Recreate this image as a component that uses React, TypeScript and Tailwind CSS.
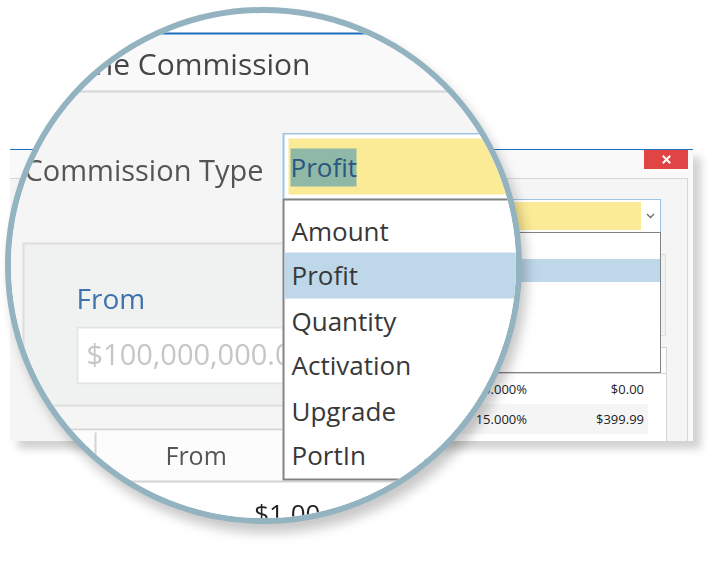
import React from 'react';

const TYPES = ['Amount', 'Profit', 'Quantity', 'Activation', 'Upgrade', 'PortIn'];

const ROWS = [
  { from: '$1.00', to: '$399.99', rate: '0.000%', amount: '$0.00' },
  { from: '$400.00', to: '$100,000,000.00', rate: '15.000%', amount: '$399.99' },
  { from: '', to: '', rate: '', amount: '' },
];

const Chevron = () => (
  <svg width="9" height="6" viewBox="0 0 9 6" fill="none" stroke="#6b6b6b" strokeWidth="1.3">
    <polyline points="1,1 4.5,4.5 8,1" />
  </svg>
);

const CloseIcon = () => (
  <svg width="9" height="9" viewBox="0 0 9 9" stroke="#fff" strokeWidth="2" strokeLinecap="square">
    <line x1="1.5" y1="1.5" x2="7.5" y2="7.5" />
    <line x1="7.5" y1="1.5" x2="1.5" y2="7.5" />
  </svg>
);

// the dialog, drawn once at 1x and once inside the lens at 2x
const Dialog: React.FC = () => (
  <div className="absolute z-0 left-[10px] top-[149px] w-[683px] h-[292px] bg-[#f9f9f9] border-t border-[#1f6fc0] shadow-[8px_8px_8px_rgba(0,0,0,0.18)] flex flex-col">
    <div className="h-[28px] flex justify-between shrink-0">
      <span className="pl-[141px] pt-[1px] self-center text-[15px] text-[#454545]">Define Commission</span>
      <button className="w-[44px] h-[19px] mr-[5px] bg-[#e04444] flex items-center justify-center">
        <CloseIcon />
      </button>
    </div>

    <div className="flex-1 mr-[5px] border-t border-r border-[#d6d6d6] bg-[#f5f5f5] flex flex-col overflow-hidden">
      <div className="mt-[20px] shrink-0 flex items-center">
        <span className="w-[262.5px] pl-[134px] pt-[3px] text-[14.5px] text-[#555]">Commission Type</span>
        <div className="relative z-10 w-[388.5px] h-[34px] border border-[#9ec4e4] bg-white pl-[2px] py-[2px] flex">
          <div className="flex-1 bg-[#fbea96] flex items-center pl-[1.5px]">
            <span className="bg-[#8fb9a6] text-[#2b5680] text-[13px] leading-[19px]">Profit</span>
          </div>
          <div className="w-[19px] flex items-center justify-center">
            <Chevron />
          </div>
          <ul className="absolute left-[-1px] top-full w-[388.5px] border border-[#838383] bg-white pt-[3.5px]">
            {TYPES.map((t) => (
              <li
                key={t}
                className={`h-[22.5px] pl-1 pt-[1px] flex items-center text-[13px] text-[#383838] ${t === 'Profit' ? 'bg-[#bed8ea]' : ''}`}
              >
                {t}
              </li>
            ))}
          </ul>
        </div>
      </div>

      <div className="mt-[21px] ml-[133px] shrink-0 w-[523px] h-[82px] border border-[#dedede] bg-[#f0f1f1] pt-[16.5px] pl-[26px] flex flex-col">
        <span className="text-[14px] leading-[19px] text-[#3f72aa]">From</span>
        <div className="mt-[5px] w-[200px] h-[29.5px] border border-[#e3e3e3] bg-white flex items-center pl-[4px]">
          <span className="text-[14.5px] text-[#c6c6c6]">$100,000,000.00</span>
        </div>
      </div>

      <div className="mt-[11px] ml-[133px] shrink-0 w-[524px] h-[130px] border-t border-l border-r border-[#d4d4d4] bg-white text-[13px] text-[#222]">
        <div className="h-[26px] pt-[1px] flex border-b border-[#d4d4d4] bg-[#fcfcfc] text-[12.5px] text-[#555]">
          <div className="w-[35.5px] border-r border-[#d4d4d4]" />
          <div className="w-[116.5px] pl-[35px] flex items-center">From</div>
          <div className="w-[118px] pl-[40px] flex items-center">To</div>
          <div className="w-[117px] pl-[40px] flex items-center">Rate</div>
          <div className="w-[117px] pl-[35px] flex items-center">Amount</div>
        </div>
        {ROWS.map((r, i) => (
          <div key={i} className={`h-[30px] w-fit pt-[2px] flex ${i % 2 === 1 ? 'bg-[#f5f5f5]' : ''}`}>
            <div className="w-[35.5px]" />
            <div className="w-[116.5px] pr-1 flex items-center justify-end">{r.from}</div>
            <div className="w-[118px] pr-1 flex items-center justify-end">{r.to}</div>
            <div className="w-[117px] pr-1 flex items-center justify-end">{r.rate}</div>
            <div className="w-[117px] pr-1 flex items-center justify-end">{r.amount}</div>
          </div>
        ))}
      </div>
    </div>
  </div>
);

export default function App() {
  return (
    <div className="relative w-[718px] h-[576px] bg-white overflow-hidden font-['Open_Sans',sans-serif]">
      <Dialog />

      {/* magnifier lens */}
      <div className="absolute z-20 left-[5px] top-[7px] w-[517px] h-[517px] rounded-full border-[6px] border-[#94b3c1] bg-white overflow-hidden shadow-[5px_9px_12px_rgba(0,0,0,0.22)]">
        <div className="absolute left-[-11px] top-[-13px] w-[718px] h-[576px] scale-200 origin-[263.5px_265.5px]">
          <Dialog />
        </div>
      </div>
    </div>
  );
}
